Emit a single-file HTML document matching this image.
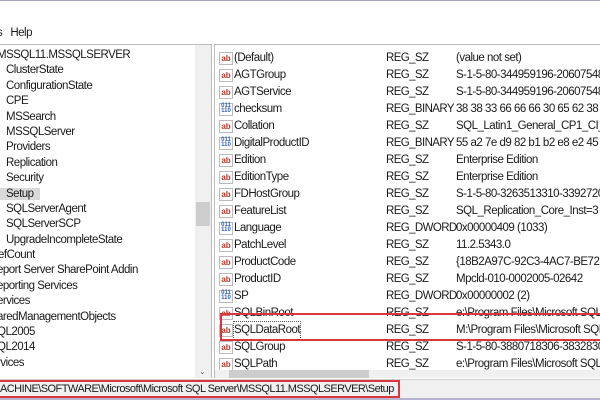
<!DOCTYPE html>
<html><head><meta charset="utf-8"><style>
*{margin:0;padding:0;box-sizing:border-box}
body{width:600px;height:400px;overflow:hidden;background:#fff;font-family:"Liberation Sans",sans-serif;font-size:11.5px;letter-spacing:-0.5px;color:#1a1a1a;position:relative}
.top{position:absolute;left:0;top:0;width:600px;height:1px;background:#a9a6c4}
.menu{position:absolute;top:27px;left:-3px}
.left{position:absolute;left:0;top:44px;width:212px;height:334px;border-top:1px solid #bdbdbd;border-right:1px solid #bdbdbd;overflow:hidden}
.tree{position:absolute;left:0;top:3px;line-height:15.4px;white-space:nowrap}
.tree div{height:15.4px}
.vs{position:absolute;left:195px;top:0;width:16px;height:334px;background:#f0f0f0}
.vs .th{position:absolute;left:1px;top:157px;width:14px;height:24px;background:#cdcdcd}
.right{position:absolute;left:214px;top:44px;width:386px;height:334px;border-top:1px solid #bdbdbd;border-left:1px solid #bdbdbd;overflow:hidden}
.row{position:absolute;left:0;height:17px;line-height:17px;white-space:nowrap;width:400px}
.row .ic{position:absolute;left:4px;top:2px;width:14px;height:13px;border:1px solid #bbb;background:#fff;font-size:8px;letter-spacing:0;line-height:11px;color:#c0392b;text-align:center;font-weight:bold}
.row .ic.b{color:#2c5fb5;font-size:6px;line-height:5px}
.row .n{position:absolute;left:19px}
.row .t{position:absolute;left:171px;letter-spacing:-0.6px}
.row .d{position:absolute;left:241px}
.hs{position:absolute;left:0;top:325px;width:386px;height:9px;background:#f0f0f0}
.hs .th{position:absolute;left:14px;top:0;width:140px;height:9px;background:#cdcdcd}
.status{position:absolute;left:0;top:379px;width:600px;height:21px;background:#f0f0f0;border-top:1px solid #d0d0d0;line-height:19px;white-space:nowrap;font-size:11px;letter-spacing:-0.55px}
.status:after{content:"";position:absolute;left:0;bottom:0;width:600px;height:2px;background:#b7b4d0}
.rb1{position:absolute;left:-2px;top:380px;width:402px;height:18px;border:2px solid #d9363e}
.rb2{position:absolute;left:220px;top:313px;width:390px;height:28px;border:2px solid #d9363e}
.sel{outline:1px dotted #555}
</style></head><body>
<div class="top"></div>
<div class="menu">s&nbsp;&nbsp;&nbsp;Help</div>
<div class="left">
<div class="tree">
<div style="margin-left:-3px">MSSQL11.MSSQLSERVER</div>
<div style="padding-left:6px">ClusterState</div>
<div style="padding-left:6px">ConfigurationState</div>
<div style="padding-left:6px">CPE</div>
<div style="padding-left:6px">MSSearch</div>
<div style="padding-left:6px">MSSQLServer</div>
<div style="padding-left:6px">Providers</div>
<div style="padding-left:6px">Replication</div>
<div style="padding-left:6px">Security</div>
<div style="padding-left:0"><span style="background:#d9d9d9;padding:0 6px">Setup</span></div>
<div style="padding-left:6px">SQLServerAgent</div>
<div style="padding-left:6px">SQLServerSCP</div>
<div style="padding-left:6px">UpgradeIncompleteState</div>
<div style="margin-left:-2px">efCount</div>
<div style="margin-left:-3px">eport Server SharePoint Addin</div>
<div style="margin-left:-3px">eporting Services</div>
<div style="margin-left:-3px">ervices</div>
<div style="margin-left:-3px">aredManagementObjects</div>
<div style="margin-left:-3px">QL2005</div>
<div style="margin-left:-3px">QL2014</div>
<div style="margin-left:-3px">rvices</div>
</div>
<div class="vs"><div class="th"></div><div style="position:absolute;top:322px;left:4px;font-size:8px;color:#666">&#8964;</div></div>
</div>
<div class="right">
<div class="row" style="top:5px"><span class="ic">ab</span><span class="n">(Default)</span><span class="t">REG_SZ</span><span class="d">(value not set)</span></div>
<div class="row" style="top:22px"><span class="ic">ab</span><span class="n">AGTGroup</span><span class="t">REG_SZ</span><span class="d">S-1-5-80-344959196-20607548</span></div>
<div class="row" style="top:39px"><span class="ic">ab</span><span class="n">AGTService</span><span class="t">REG_SZ</span><span class="d">S-1-5-80-344959196-20607548</span></div>
<div class="row" style="top:56px"><span class="ic b">011<br>110</span><span class="n">checksum</span><span class="t">REG_BINARY</span><span class="d">38 38 33 66 66 66 30 65 62 38 3</span></div>
<div class="row" style="top:73px"><span class="ic">ab</span><span class="n">Collation</span><span class="t">REG_SZ</span><span class="d">SQL_Latin1_General_CP1_CI_AS</span></div>
<div class="row" style="top:90px"><span class="ic b">011<br>110</span><span class="n">DigitalProductID</span><span class="t">REG_BINARY</span><span class="d">55 a2 7e d9 82 b1 b2 e8 e2 45 8</span></div>
<div class="row" style="top:107px"><span class="ic">ab</span><span class="n">Edition</span><span class="t">REG_SZ</span><span class="d">Enterprise Edition</span></div>
<div class="row" style="top:124px"><span class="ic">ab</span><span class="n">EditionType</span><span class="t">REG_SZ</span><span class="d">Enterprise Edition</span></div>
<div class="row" style="top:141px"><span class="ic">ab</span><span class="n">FDHostGroup</span><span class="t">REG_SZ</span><span class="d">S-1-5-80-3263513310-3392720</span></div>
<div class="row" style="top:158px"><span class="ic">ab</span><span class="n">FeatureList</span><span class="t">REG_SZ</span><span class="d">SQL_Replication_Core_Inst=3 S</span></div>
<div class="row" style="top:175px"><span class="ic b">011<br>110</span><span class="n">Language</span><span class="t">REG_DWORD</span><span class="d">0x00000409 (1033)</span></div>
<div class="row" style="top:192px"><span class="ic">ab</span><span class="n">PatchLevel</span><span class="t">REG_SZ</span><span class="d">11.2.5343.0</span></div>
<div class="row" style="top:209px"><span class="ic">ab</span><span class="n">ProductCode</span><span class="t">REG_SZ</span><span class="d">{18B2A97C-92C3-4AC7-BE72-F</span></div>
<div class="row" style="top:226px"><span class="ic">ab</span><span class="n">ProductID</span><span class="t">REG_SZ</span><span class="d">Mpcld-010-0002005-02642</span></div>
<div class="row" style="top:243px"><span class="ic b">011<br>110</span><span class="n">SP</span><span class="t">REG_DWORD</span><span class="d">0x00000002 (2)</span></div>
<div class="row" style="top:260px"><span class="ic">ab</span><span class="n">SQLBinRoot</span><span class="t">REG_SZ</span><span class="d">e:\Program Files\Microsoft SQL</span></div>
<div class="row" style="top:277px"><span class="ic">ab</span><span class="n sel">SQLDataRoot</span><span class="t">REG_SZ</span><span class="d">M:\Program Files\Microsoft SQL</span></div>
<div class="row" style="top:294px"><span class="ic">ab</span><span class="n">SQLGroup</span><span class="t">REG_SZ</span><span class="d">S-1-5-80-3880718306-3832830</span></div>
<div class="row" style="top:311px"><span class="ic">ab</span><span class="n">SQLPath</span><span class="t">REG_SZ</span><span class="d">e:\Program Files\Microsoft SQL</span></div>
<div class="hs"><div class="th"></div></div>
</div>
<div class="status">ACHINE\SOFTWARE\Microsoft\Microsoft SQL Server\MSSQL11.MSSQLSERVER\Setup</div>
<div class="rb1"></div>
<div class="rb2"></div>
</body></html>
